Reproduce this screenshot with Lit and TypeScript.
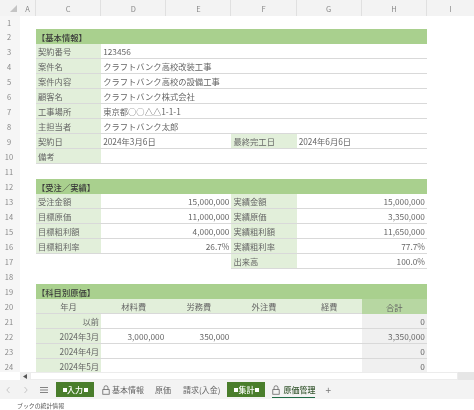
import { LitElement, html, css } from "lit";
import { customElement } from "lit/decorators.js";

type Cell = [string, string?];

const lock = html`<svg class="lock" viewBox="0 0 10 12" width="8" height="10"><path d="M2.5 5.5V3.2a2.5 2.5 0 0 1 5 0v2.3" fill="none" stroke="currentColor" stroke-width="1"/><rect x="1" y="5.5" width="8" height="5.8" fill="none" stroke="currentColor" stroke-width="1"/></svg>`;

const info: [string, string][] = [
  ["契約番号", "123456"],
  ["案件名", "クラフトバンク高校改装工事"],
  ["案件内容", "クラフトバンク高校の設備工事"],
  ["顧客名", "クラフトバンク株式会社"],
  ["工事場所", "東京都○○△△1-1-1"],
  ["主担当者", "クラフトバンク太郎"],
];
const perf: [string, string, string, string][] = [
  ["受注金額", "15,000,000", "実績金額", "15,000,000"],
  ["目標原価", "11,000,000", "実績原価", "3,350,000"],
  ["目標粗利額", "4,000,000", "実績粗利額", "11,650,000"],
  ["目標粗利率", "26.7%", "実績粗利率", "77.7%"],
  ["", "", "出来高", "100.0%"],
];
const cost: string[][] = [
  ["以前", "", "", "", "", "0"],
  ["2024年3月", "3,000,000", "350,000", "", "", "3,350,000"],
  ["2024年4月", "", "", "", "", "0"],
  ["2024年5月", "", "", "", "", "0"],
];

@customElement("app-root")
export class AppRoot extends LitElement {
  static styles = css`
    :host {
      display: flex;
      flex-direction: column;
      width: 474px;
      height: 410px;
      overflow: hidden;
      background: #fff;
      font-family: "Noto Sans CJK JP", "Noto Sans", sans-serif;
      font-size: 8.3px;
      color: #666;
      filter: blur(0.45px);
    }
    .sheet {
      height: 372px;
      overflow: hidden;
      display: grid;
      grid-template-columns: 20px 16px repeat(6, 65.17px) 1fr;
      grid-template-rows: 16px 13px;
      grid-auto-rows: 15px;
      align-content: start;
    }
    .cell {
      min-width: 0;
      display: flex;
      align-items: center;
      padding: 0 2px;
      white-space: nowrap;
      box-sizing: border-box;
      overflow: hidden;
    }
    .colhead {
      background: #f3f3f3;
      color: #888;
      font-size: 7.5px;
      justify-content: center;
      border-right: 1px solid #e0e0e0;
    }
    .colhead.last { border-right: 0; }
    .corner {
      background: #f3f3f3;
      justify-content: flex-end;
      padding: 0 3px 0 0;
    }
    .rowhead {
      background: #f6f6f6;
      color: #888;
      font-size: 7.5px;
      justify-content: center;
      padding: 0 2px 0 0;
    }
    .gap { background: #fff; }
    .title {
      grid-column: 3 / span 6;
      background: #a9d08e;
      color: #3a3a3a;
      font-weight: 500;
      padding-left: 1px;
    }
    .label { background: #e2efda; border-bottom: 1px solid #d9d9d9; }
    .value { border-bottom: 1px solid #d9d9d9; background: #fff; }
    .s2 { grid-column: span 2; }
    .s3 { grid-column: span 3; }
    .s5 { grid-column: span 5; }
    .s6 { grid-column: span 6; }
    .right { justify-content: flex-end; }
    .center { justify-content: center; }
    .total { background: #f0f0f0; }
    .totalhead { background: #b7d7a2; border-bottom: 0; }
    .blank { background: #fff; }
    .scroll {
      height: 8px;
      display: flex;
      background: #f6f6f6;
    }
    .scroll-left { width: 20px; background: #fff; }
    .scroll-btn {
      width: 10px;
      background: #eeeeee;
      display: flex;
      align-items: center;
      justify-content: center;
    }
    .scroll-btn svg { display: block; }
    .scroll-track { flex: 1; background: #fff; border: 1px solid #ececec; box-sizing: border-box; }
    .scroll-end { width: 16px; background: #e6e6e6; }
    .tabs {
      height: 19px;
      background: #f3f3f3;
      display: flex;
      align-items: center;
      font-size: 8px;
      color: #666;
    }
    .nav { display: flex; width: 56px; flex: none; color: #bbb; align-items: center; box-sizing: border-box; padding-left: 6px; }
    .nav svg { display: block; }
    .nav .next { margin-left: 14px; }
    .nav .menu { margin-left: 12px; color: #666; }
    .tab {
      display: flex;
      align-items: center;
      gap: 2px;
      height: 19px;
      white-space: nowrap;
    }
    .tab.green {
      width: 38px;
      height: 15px;
      background: #4a7e2c;
      color: #fff;
      justify-content: center;
      font-weight: 500;
      gap: 0;
    }
    .sq { width: 4px; height: 4px; background: #fff; flex: none; margin: 0 0.5px; }
    .lock { flex: none; color: #666; }
    .t1 { margin-left: 8px; }
    .t2 { margin-left: 11px; }
    .t3 { margin-left: 12px; }
    .t4 { margin-left: 7px; }
    .active {
      margin-left: 7px;
      font-weight: 500;
      color: #3a5a34;
      position: relative;
      gap: 3px;
      width: 43px;
    }
    .active::after {
      content: "";
      position: absolute;
      left: 0;
      right: 0;
      bottom: 1px;
      height: 1px;
      background: #1f6b45;
    }
    .plus { margin-left: 10px; font-size: 10px; color: #777; }
    .status {
      flex: 1;
      background: #fff;
      font-size: 5.9px;
      color: #555;
      padding: 2px 0 0 17px;
      line-height: 9px;
      white-space: nowrap;
    }
  `;

  private row(n: number, cells: Cell[]) {
    return html`<div class="cell rowhead">${n}</div><div class="cell gap"></div>${cells.map(
      ([t, c]) => html`<div class="cell ${c ?? ""}">${t}</div>`
    )}<div class="cell gap"></div>`;
  }

  private sheet() {
    const rows: unknown[] = [];
    rows.push(html`<div class="cell corner"><svg width="7" height="7" viewBox="0 0 7 7"><path d="M7 0V7H0Z" fill="#c4c4c4"/></svg></div>`);
    for (const h of ["A", "C", "D", "E", "F", "G", "H"]) rows.push(html`<div class="cell colhead">${h}</div>`);
    rows.push(html`<div class="cell colhead last">I</div>`);
    rows.push(this.row(1, [["", "s6 blank"]]));
    rows.push(this.row(2, [["【基本情報】", "title"]]));
    info.forEach(([l, v], i) => rows.push(this.row(3 + i, [[l, "label"], [v, "value s5"]])));
    rows.push(this.row(9, [["契約日", "label"], ["2024年3月6日", "value s2"], ["最終完工日", "label"], ["2024年6月6日", "value s2"]]));
    rows.push(this.row(10, [["備考", "label"], ["", "value s5"]]));
    rows.push(this.row(11, [["", "s6 blank"]]));
    rows.push(this.row(12, [["【受注／実績】", "title"]]));
    perf.forEach(([a, b, c, d], i) => {
      const left: Cell[] = a
        ? [[a, "label"], [b, "value s2 right"]]
        : [["", "s3 blank"]];
      rows.push(this.row(13 + i, [...left, [c, "label"], [d, "value s2 right"]]));
    });
    rows.push(this.row(18, [["", "s6 blank"]]));
    rows.push(this.row(19, [["【科目別原価】", "title"]]));
    rows.push(this.row(20, [
      ["年月", "label center"],
      ["材料費", "label center"],
      ["労務費", "label center"],
      ["外注費", "label center"],
      ["経費", "label center"],
      ["合計", "label center totalhead"],
    ]));
    cost.forEach((r, i) => {
      rows.push(this.row(21 + i, [
        [r[0], "label right"],
        [r[1], "value right"],
        [r[2], "value right"],
        [r[3], "value right"],
        [r[4], "value right"],
        [r[5], "value right total"],
      ]));
    });
    return rows;
  }

  render() {
    return html`
      <div class="sheet">${this.sheet()}</div>
      <div class="scroll">
        <div class="scroll-left"></div>
        <div class="scroll-btn"><svg width="4" height="5" viewBox="0 0 4 5"><path d="M4 0V5L0 2.5Z" fill="#555"/></svg></div>
        <div class="scroll-track"></div>
        <div class="scroll-end"></div>
      </div>
      <div class="tabs">
        <div class="nav">
          <svg width="4" height="8" viewBox="0 0 4 8"><path d="M3.5 1L.8 4l2.7 3" fill="none" stroke="currentColor" stroke-width=".8"/></svg>
          <svg class="next" width="4" height="8" viewBox="0 0 4 8"><path d="M.5 1l2.7 3L.5 7" fill="none" stroke="currentColor" stroke-width=".8"/></svg>
          <svg class="menu" width="8" height="8" viewBox="0 0 8 8"><path d="M0 1.5H8M0 4H8M0 6.5H8" fill="none" stroke="currentColor" stroke-width=".8"/></svg>
        </div>
        <div class="tab green"><span class="sq"></span>入力<span class="sq"></span></div>
        <div class="tab t1">${lock}基本情報</div>
        <div class="tab t2">原価</div>
        <div class="tab t3">請求(入金)</div>
        <div class="tab green t4"><span class="sq"></span>集計<span class="sq"></span></div>
        <div class="tab active">${lock}原価管理</div>
        <div class="tab plus">+</div>
      </div>
      <div class="status">ブックの統計情報</div>
    `;
  }
}
